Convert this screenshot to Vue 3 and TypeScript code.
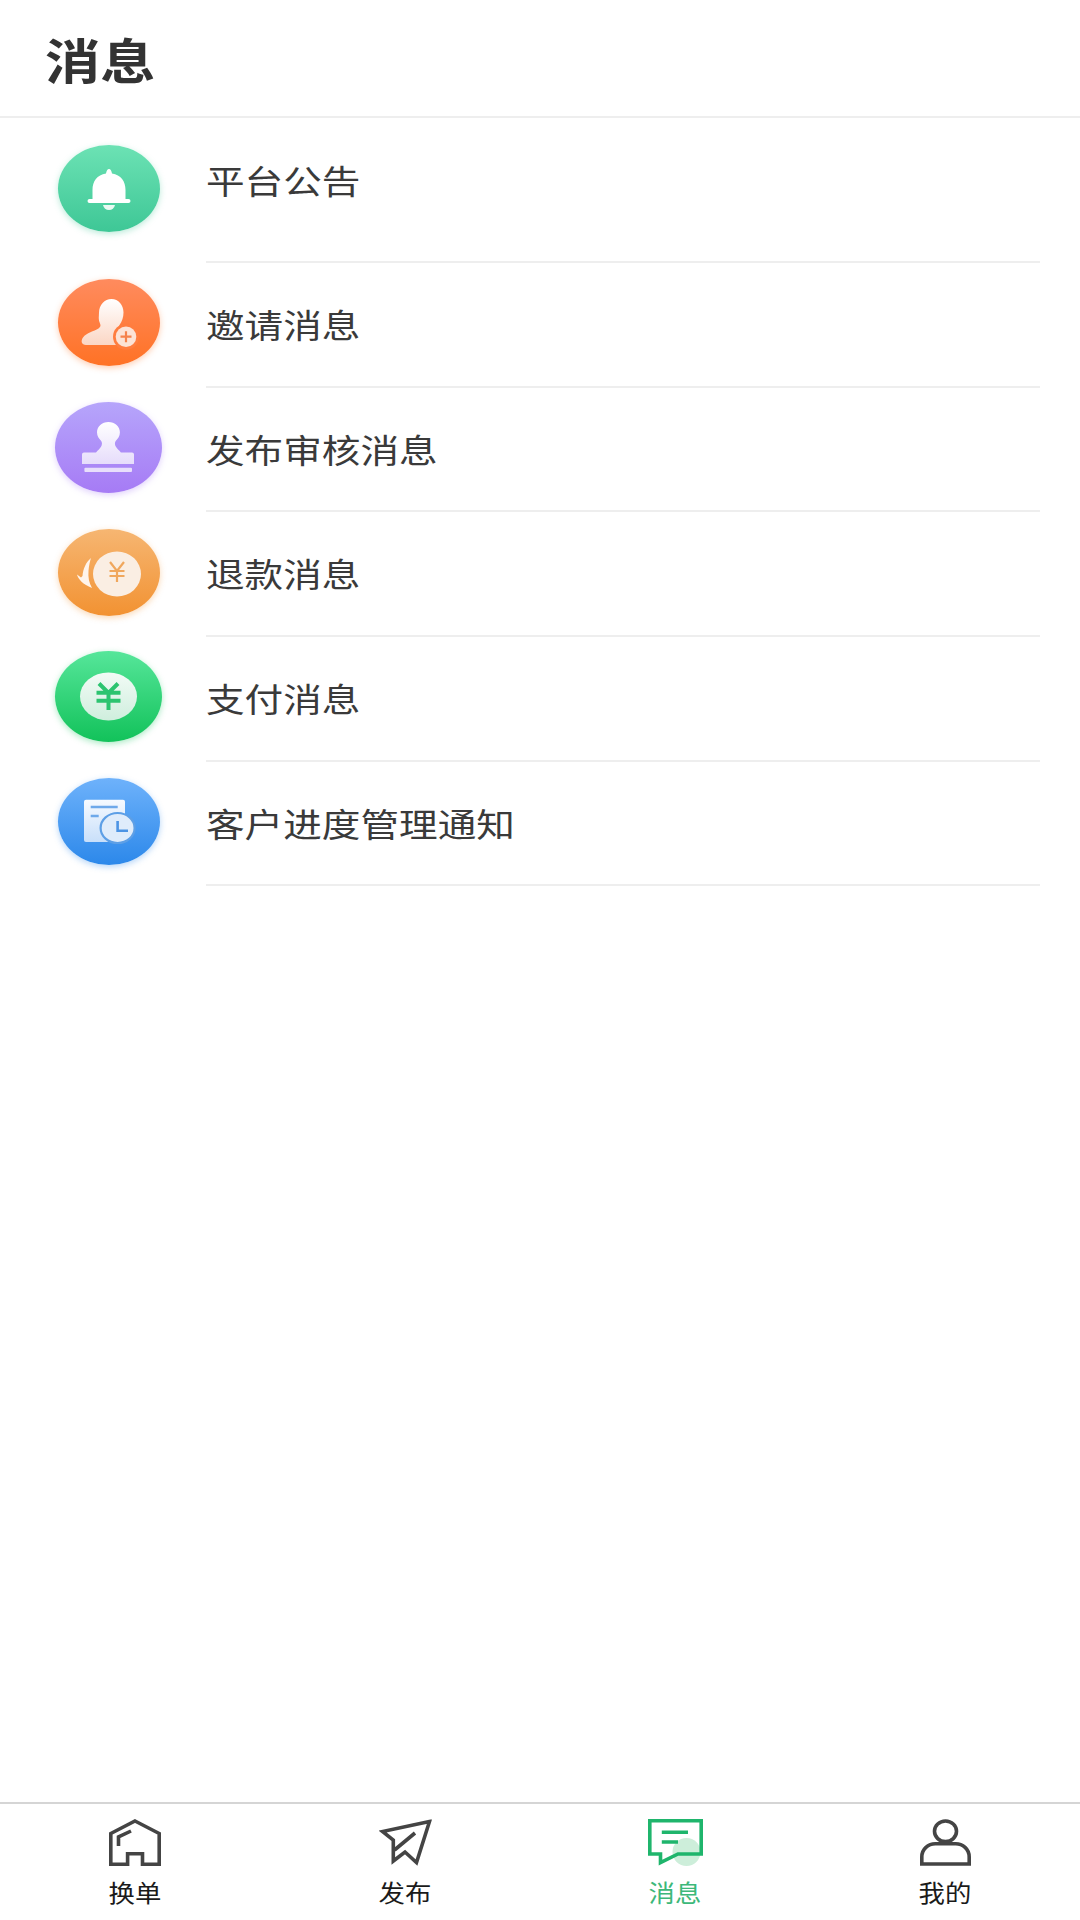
<script setup lang="ts">
interface MessageRow {
  title: string
  kind: 'notice' | 'invite' | 'audit' | 'refund' | 'pay' | 'customer'
}

interface TabItem {
  label: string
  kind: 'home' | 'publish' | 'message' | 'mine'
}

const rows: MessageRow[] = [
  { title: '平台公告', kind: 'notice' },
  { title: '邀请消息', kind: 'invite' },
  { title: '发布审核消息', kind: 'audit' },
  { title: '退款消息', kind: 'refund' },
  { title: '支付消息', kind: 'pay' },
  { title: '客户进度管理通知', kind: 'customer' },
]

const tabs: TabItem[] = [
  { label: '换单', kind: 'home' },
  { label: '发布', kind: 'publish' },
  { label: '消息', kind: 'message' },
  { label: '我的', kind: 'mine' },
]
</script>

<template>
  <div class="page">
    <header class="header">
      <h1 class="title">消息</h1>
    </header>

    <main class="list">
      <div v-for="row in rows" :key="row.kind" class="row" :class="row.kind">
        <div class="icon-col">
          <div class="badge">
            <svg v-if="row.kind === 'notice'" viewBox="0 0 102 87">
              <path fill="#fff" d="M51 24c1.500 0 2.600 2 3 4.400C63 30 67.500 36 67.500 45v9H70.500a2 2 0 0 1 0 4H31.500a2 2 0 0 1 0-4H34.500v-9C34.500 36 39 30 48 28.400c.4-2.400 1.500-4.400 3-4.400z" />
              <path fill="#eafaf3" d="M45 60h12c-.6 3-3 5-6 5s-5.400-2-6-5z" />
            </svg>
            <svg v-else-if="row.kind === 'invite'" viewBox="0 0 102 87">
              <defs>
                <linearGradient id="inviteFill" x1="0" y1="0" x2="0" y2="1">
                  <stop offset="0" stop-color="#fff" />
                  <stop offset="1" stop-color="#fbd6c4" />
                </linearGradient>
              </defs>
              <path fill="url(#inviteFill)" d="M53.500 20c7 0 12 6 12 13.500 0 5-1.500 9-4 12.500-1.500 2-1 4 .5 5.500L66 66H28c-4.500 0-5.500-4-3-7.500 3.500-5 11-6 15.500-9 2-1.500 2.500-3 1.500-5C40 41 41 37 41 33.500 41 26 46.500 20 53.500 20z" />
              <circle cx="68" cy="57.700" r="13" fill="#ff7d3f" />
              <circle cx="68" cy="57.700" r="10.300" fill="#fce3d6" />
              <path fill="none" stroke="#f5824c" stroke-width="2.200" d="M62.500 57.700h11M68 52.200v11" />
            </svg>
            <svg v-else-if="row.kind === 'audit'" viewBox="0 0 107 91">
              <defs>
                <linearGradient id="auditFill" x1="0" y1="0" x2="0" y2="1">
                  <stop offset="0" stop-color="#fff" />
                  <stop offset="1" stop-color="#e6dcfb" />
                </linearGradient>
              </defs>
              <path fill="url(#auditFill)" d="M53.400 20c6.500 0 11.500 4.700 11.500 10.300 0 3.800-2 6.500-4 8.500-1.300 1.500-1.300 4 0 6 1 1.700 3 3.500 5 5.700H77a2 2 0 0 1 2 2V62H27v-9.500a2 2 0 0 1 2-2h12c2-2.200 4-4 5-5.700 1.300-2 1.300-4.500 0-6-2-2-4-4.700-4-8.500C42 24.700 47 20 53.400 20z" />
              <rect x="29.400" y="65.700" width="47.600" height="4.300" rx="1" fill="#e8defb" />
            </svg>
            <svg v-else-if="row.kind === 'refund'" viewBox="0 0 102 87">
              <path fill="#fff4ea" d="M33 29c-5 4-8 11-8.500 18L23 48.500l-4-3c1 4.500 6 10 15 13.500-3-5-4-11-3.500-17C31 36 32 32 33 29z" />
              <ellipse cx="59" cy="45" rx="24" ry="22.500" fill="#faeee3" />
              <path fill="none" stroke="#f0a75d" stroke-width="2.200" d="M52 33l7 9 7-9M51.500 42h15M51.500 47h15M59 42v11" />
            </svg>
            <svg v-else-if="row.kind === 'pay'" viewBox="0 0 107 91">
              <defs>
                <linearGradient id="payFill" x1="0" y1="0" x2="0" y2="1">
                  <stop offset="0" stop-color="#f2fbf6" />
                  <stop offset="1" stop-color="#cfeedd" />
                </linearGradient>
              </defs>
              <ellipse cx="53.500" cy="45.500" rx="28.500" ry="24" fill="url(#payFill)" />
              <path fill="none" stroke="#2cc470" stroke-width="4" d="M44 32.500l9.500 9.500 9.500-9.500M41.500 41.700h24M41.500 49.700h24M53.500 42v17" />
            </svg>
            <svg v-else viewBox="0 0 102 87">
              <defs>
                <linearGradient id="docFill" x1="0" y1="0" x2="0" y2="1">
                  <stop offset="0" stop-color="#f6faff" />
                  <stop offset="1" stop-color="#c8dffa" />
                </linearGradient>
              </defs>
              <rect x="26" y="21.700" width="41" height="42.300" rx="2" fill="url(#docFill)" />
              <path fill="none" stroke="#6ea9ea" stroke-width="2.400" d="M32.700 29h27M32.700 38h8" />
              <ellipse cx="59.600" cy="50" rx="17" ry="15" fill="#dfecfb" stroke="#5d9fe6" stroke-width="2.200" />
              <path fill="none" stroke="#4d94e4" stroke-width="2.600" d="M59.600 43v9.700H70" />
            </svg>
          </div>
        </div>
        <div class="row-body">
          <span class="row-title">{{ row.title }}</span>
        </div>
      </div>
    </main>

    <nav class="tabbar">
      <div v-for="tab in tabs" :key="tab.kind" class="tab" :class="{ active: tab.kind === 'message' }">
        <svg v-if="tab.kind === 'home'" class="tab-icon" width="52" height="47" viewBox="0 0 52 47">
          <path fill="none" stroke="#444" stroke-width="3.600" d="M26 2L50.200 14.500v30.700H33.500V34.700H18.600v10.500H1.800V14.500zM9.500 27v-9L22 12" />
        </svg>
        <svg v-else-if="tab.kind === 'publish'" class="tab-icon" width="53" height="47" viewBox="0 0 53 47">
          <path fill="none" stroke="#444" stroke-width="3.600" d="M50.500 2.500L3.500 12.500l10.800 8.500v21l11.700-9 11.500 10.500zM36 14L15.500 31" />
        </svg>
        <svg v-else-if="tab.kind === 'message'" class="tab-icon" width="55" height="47" viewBox="0 0 55 47">
          <circle cx="38.500" cy="33" r="14" fill="#cdeeda" />
          <path fill="none" stroke="#1fb56c" stroke-width="3.600" d="M1.800 1.800h51.400v33.200H30L12.500 43.500V35H1.800z" />
          <path fill="none" stroke="#1fb56c" stroke-width="3.400" d="M13.800 13.300H40M13.800 23H30" />
        </svg>
        <svg v-else class="tab-icon" width="51" height="47" viewBox="0 0 51 47">
          <ellipse cx="25.500" cy="12.300" rx="11" ry="10.300" fill="none" stroke="#444" stroke-width="3.600" />
          <path fill="none" stroke="#444" stroke-width="3.600" d="M1.800 45V38c0-8 6.500-13.200 13.500-13.200h20.400C42.700 24.800 49.200 30 49.200 38v7z" />
        </svg>
        <span class="tab-label">{{ tab.label }}</span>
      </div>
    </nav>
  </div>
</template>

<style scoped>
.page {
  display: flex;
  flex-direction: column;
  width: 1080px;
  height: 1920px;
  background: #fff;
  font-family: "Noto Sans CJK SC", "Noto Sans", sans-serif;
  overflow: hidden;
}

/* 顶部标题 */
.header {
  box-sizing: border-box;
  height: 118px;
  padding: 28px 0 0 45px;
  border-bottom: 2px solid #eee;
}

.title {
  display: inline-block;
  margin: 0;
  font-size: 48px;
  font-weight: 700;
  line-height: 60px;
  color: #333;
  transform: scaleX(1.15);
  transform-origin: left center;
}

/* 列表 */
.list {
  flex: 1;
}

.row {
  display: flex;
  height: 124.700px;
}

.row.notice {
  height: 145px;
}

.icon-col {
  display: flex;
  flex: 0 0 206px;
  align-items: center;
  padding-bottom: 5px;
  box-sizing: border-box;
}

.badge {
  width: 102px;
  height: 87px;
  margin-left: 57.500px;
  border-radius: 50%;
}

.badge svg {
  display: block;
  width: 100%;
  height: 100%;
}

.audit .badge,
.pay .badge {
  width: 107px;
  height: 91px;
  margin-left: 54.500px;
}

.notice .badge {
  background: linear-gradient(#6ce2b4, #3ec796);
  box-shadow: 0 2px 6px rgba(62, 199, 150, 0.35);
}

.invite .badge {
  background: linear-gradient(#ff8b5e, #ff7225);
  box-shadow: 0 2px 6px rgba(255, 114, 37, 0.35);
}

.audit .badge {
  background: linear-gradient(#b6a5fb, #a67bf5);
  box-shadow: 0 2px 6px rgba(166, 123, 245, 0.35);
}

.refund .badge {
  background: linear-gradient(#f6b672, #f29232);
  box-shadow: 0 2px 6px rgba(242, 146, 50, 0.35);
}

.pay .badge {
  background: linear-gradient(#56e69a, #12c25a);
  box-shadow: 0 2px 6px rgba(18, 194, 90, 0.35);
}

.customer .badge {
  background: linear-gradient(#6eb2fb, #2c88ea);
  box-shadow: 0 2px 6px rgba(44, 136, 234, 0.35);
}

.row-body {
  display: flex;
  flex: 1;
  align-items: center;
  padding-bottom: 1px;
  margin-right: 40px;
  border-bottom: 2px solid #eee;
}

.notice .row-body {
  padding-bottom: 20px;
}

.row-title {
  display: inline-block;
  font-size: 33px;
  line-height: 44px;
  color: #3a3a3a;
  white-space: nowrap;
  transform: scaleX(1.17);
  transform-origin: left center;
}

/* 底部导航 */
.tabbar {
  display: grid;
  grid-template-columns: repeat(4, 1fr);
  box-sizing: border-box;
  height: 118px;
  padding-top: 15px;
  border-top: 2px solid #d5d5d5;
}

.tab {
  display: flex;
  flex-direction: column;
  align-items: center;
}

.tab-icon {
  display: block;
  flex: none;
}

.tab-label {
  display: block;
  margin-top: 11px;
  font-size: 24px;
  line-height: 30px;
  color: #1a1a1a;
  transform: scaleX(1.1);
}

.tab.active .tab-label {
  color: #3db87a;
}
</style>
